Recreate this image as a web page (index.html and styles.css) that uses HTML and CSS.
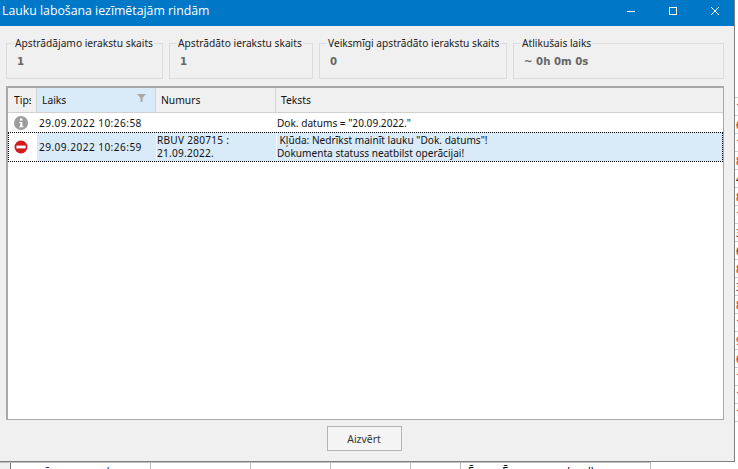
FILE: index.html
```html
<!DOCTYPE html>
<html lang="lv">
<head>
<meta charset="utf-8">
<title>Lauku labošana iezīmētajām rindām</title>
<link rel="stylesheet" href="styles.css">
</head>
<body>
<div class="desktop">
  <div class="side-text">
    <span>1</span><span class="r">6</span><span>1</span><span class="r">8</span><span>4</span><span class="r">8</span><span>1</span><span>3</span><span>6</span><span class="r">8</span><span>3</span><span class="r">8</span><span>1</span><span class="r">9</span><span class="r">6</span><span>1</span><span>1</span><span>1</span>
  </div>
  <div class="bottom-cols">
    <div class="bc b0"></div>
    <div class="bc b1"><span class="bl">ū</span><span class="bl gap1">d</span></div>
    <div class="bc b2"></div>
    <div class="bc b3"></div>
    <div class="bc b3"></div>
    <div class="bc b4"></div>
    <div class="bc b5"><span>Ē</span><span class="gap2">Ē</span><span class="gap3">d</span><span class="gap4">ll</span></div>
  </div>
  <div class="window">
    <header class="titlebar">
      <span class="title">Lauku labošana iezīmētajām rindām</span>
      <div class="controls">
        <svg width="42" height="26" viewBox="0 0 42 26"><path d="M17 11.5h8" stroke="#fff" fill="none"/></svg>
        <svg width="42" height="26" viewBox="0 0 42 26"><rect x="17.5" y="7.5" width="7" height="7" stroke="#fff" fill="none"/></svg>
        <svg width="42" height="26" viewBox="0 0 42 26"><path d="M17 7l8 8M25 7l-8 8" stroke="#fff" fill="none"/></svg>
      </div>
    </header>
    <section class="stats">
      <fieldset class="stat s1"><legend>Apstrādājamo ierakstu skaits</legend><b>1</b></fieldset>
      <fieldset class="stat s2"><legend>Apstrādāto ierakstu skaits</legend><b>1</b></fieldset>
      <fieldset class="stat s3"><legend>Veiksmīgi apstrādāto ierakstu skaits</legend><b>0</b></fieldset>
      <fieldset class="stat s4"><legend>Atlikušais laiks</legend><b>~ 0h 0m 0s</b></fieldset>
    </section>
    <section class="grid">
      <div class="row head">
        <div class="c tips"><span class="clip">Tips</span></div>
        <div class="c laiks sorted">Laiks<svg class="filter" width="9" height="8" viewBox="0 0 9 8"><path d="M0 0h9L5.5 4v4h-2V4z" fill="#a8a8a8"/></svg></div>
        <div class="c num">Numurs</div>
        <div class="c txt">Teksts</div>
      </div>
      <div class="row r1">
        <div class="c tips"><svg width="16" height="16" viewBox="0 0 16 16"><circle cx="8" cy="8" r="7" fill="#9c9c9c"/><path d="M6.2 7h3.2v4.2h1v1H6.2v-1h1V8H6.2z" fill="#fff"/><rect x="7" y="3.4" width="2.4" height="2.3" fill="#fff"/></svg></div>
        <div class="c laiks digits">29.09.2022 10:26:58</div>
        <div class="c num"></div>
        <div class="c txt">Dok. datums = "20.09.2022."</div>
      </div>
      <div class="row r2">
        <div class="c tips"><svg width="16" height="16" viewBox="0 0 16 16"><circle cx="8" cy="8" r="6.5" fill="#d01c1f"/><rect x="3.4" y="6.6" width="9.2" height="2.8" fill="#fff"/></svg></div>
        <div class="c laiks digits">29.09.2022 10:26:59</div>
        <div class="c num"><span class="cell-lines digits-soft">RBUV 280715 :<br>21.09.2022.</span></div>
        <div class="c txt"><span class="cell-lines">&nbsp;Kļūda: Nedrīkst mainīt lauku "Dok. datums"!<br>Dokumenta statuss neatbilst operācijai!</span></div>
      </div>
    </section>
    <footer class="foot"><button class="close">Aizvērt</button></footer>
  </div>
</div>
</body>
</html>
```
FILE: styles.css
```css
* { box-sizing: border-box; }
html, body { margin: 0; height: 100%; }
body { width: 738px; height: 469px; overflow: hidden; background: #fff; font-family: "Noto Sans", sans-serif; font-size: 10.1px; color: #111; }
.desktop { position: relative; width: 738px; height: 469px; overflow: hidden; }
.window { position: absolute; left: 0; top: 0; width: 735px; height: 462px; background: #f0f0f0; border-right: 1px solid #7f7f7f; border-bottom: 1px solid #7f7f7f; display: flex; flex-direction: column; }
.titlebar { height: 26px; flex: none; background: #0078c8; color: #fff; display: flex; justify-content: space-between; padding-left: 2px; }
.title { font-family: "Open Sans", sans-serif; font-size: 12.3px; line-height: 22px; }
.controls { display: flex; margin-right: -2px; }
.controls svg { display: block; }
.stats { display: flex; gap: 6px; padding: 10px 0 0 6px; height: 60px; flex: none; }
.stat { margin: 0; padding: 0 0 0 7px; border: 1px solid #dcdcdc; height: 43px; min-width: 0; }
.stat legend { padding: 0 1px; font-size: 10.2px; line-height: 14px; color: #222; white-space: nowrap; }
.stat b { display: block; margin: 5px 0 0 3px; font-family: "DejaVu Sans", sans-serif; font-size: 10.2px; line-height: 13px; color: #666; }
.s1 { width: 157px; } .s2 { width: 144px; } .s3 { width: 188px; } .s4 { width: 211px; }
.grid { margin-left: 6px; width: 718px; height: 334px; background: #fff; border: 1px solid #a8a8a8; border-top-width: 2px; border-left-width: 2px; flex: none; }
.row { display: flex; }
.c { flex: none; padding-left: 2px; display: flex; align-items: center; white-space: nowrap; overflow: hidden; }
.tips { width: 29px; padding-left: 5px; }
.clip { display: block; width: 17px; overflow: hidden; }
.laiks { width: 119px; }
.num { width: 120px; }
.txt { width: 445px; }
.digits { letter-spacing: 0.45px; }
.digits-soft { letter-spacing: 0.25px; }
.cell-lines { display: block; }
.head { height: 25px; background: #f0f0f0; border-bottom: 1px solid #d0d0d0; font-size: 10.3px; }
.head .c { border-right: 1px solid #d5d5d5; padding-left: 5px; }
.head .tips { padding-left: 6px; }
.head .sorted { background: #d9ebf9; position: relative; }
.head .txt { border-right: 0; }
.filter { position: absolute; right: 9px; top: 6px; }
.r1 { height: 19px; }
.r1 .c { line-height: 18px; }
.r1 .txt { padding-left: 1px; }
.r2 { height: 30px; background: #d9ebf9; outline: 1px dotted #000; outline-offset: -1px; }
.r2 .tips { background: #fff; }
.r2 .c { line-height: 13px; }
.r2 .num, .r2 .txt { border-left: 1px solid #f0f6fb; padding-left: 0; }
.foot { display: flex; justify-content: center; padding: 6px 0 0; margin-right: 7px; }
.close { width: 75px; height: 25px; margin-left: 1px; background: #f4f4f4; border: 1px solid #b4b4b4; font: 10.4px "Noto Sans", sans-serif; color: #333; padding: 0; }
.side-text { position: absolute; left: 735px; top: 97px; width: 3px; padding-left: 1px; border-top: 1px solid #ccc; }
.side-text span { display: block; height: 18px; line-height: 18px; border-bottom: 1px solid #ccc; margin-left: -1px; padding-left: 1px; width: 3px; overflow: hidden; font-size: 10px; color: #222; }
.side-text .r { color: #8c1010; }
.bottom-cols { position: absolute; left: 0; top: 462px; height: 7px; display: flex; border-top: 1px solid #c0c0c0; }
.bc { height: 7px; border-right: 1px solid #bbb; display: flex; white-space: pre; font-size: 11px; line-height: 15px; overflow: hidden; color: #111; }
.b0 { width: 11px; border-right-color: #777; background: #f0f0f0; }
.b1 { width: 140px; padding-left: 33px; }
.b2 { width: 100px; }
.b3 { width: 80px; }
.b4 { width: 50px; }
.b5 { width: 190px; padding-left: 7px; }
.bl { color: #1a2a8c; }
.gap1 { margin-left: 52px; }
.gap2 { margin-left: 28px; }
.gap3 { margin-left: 55px; }
.gap4 { margin-left: 18px; }
```
